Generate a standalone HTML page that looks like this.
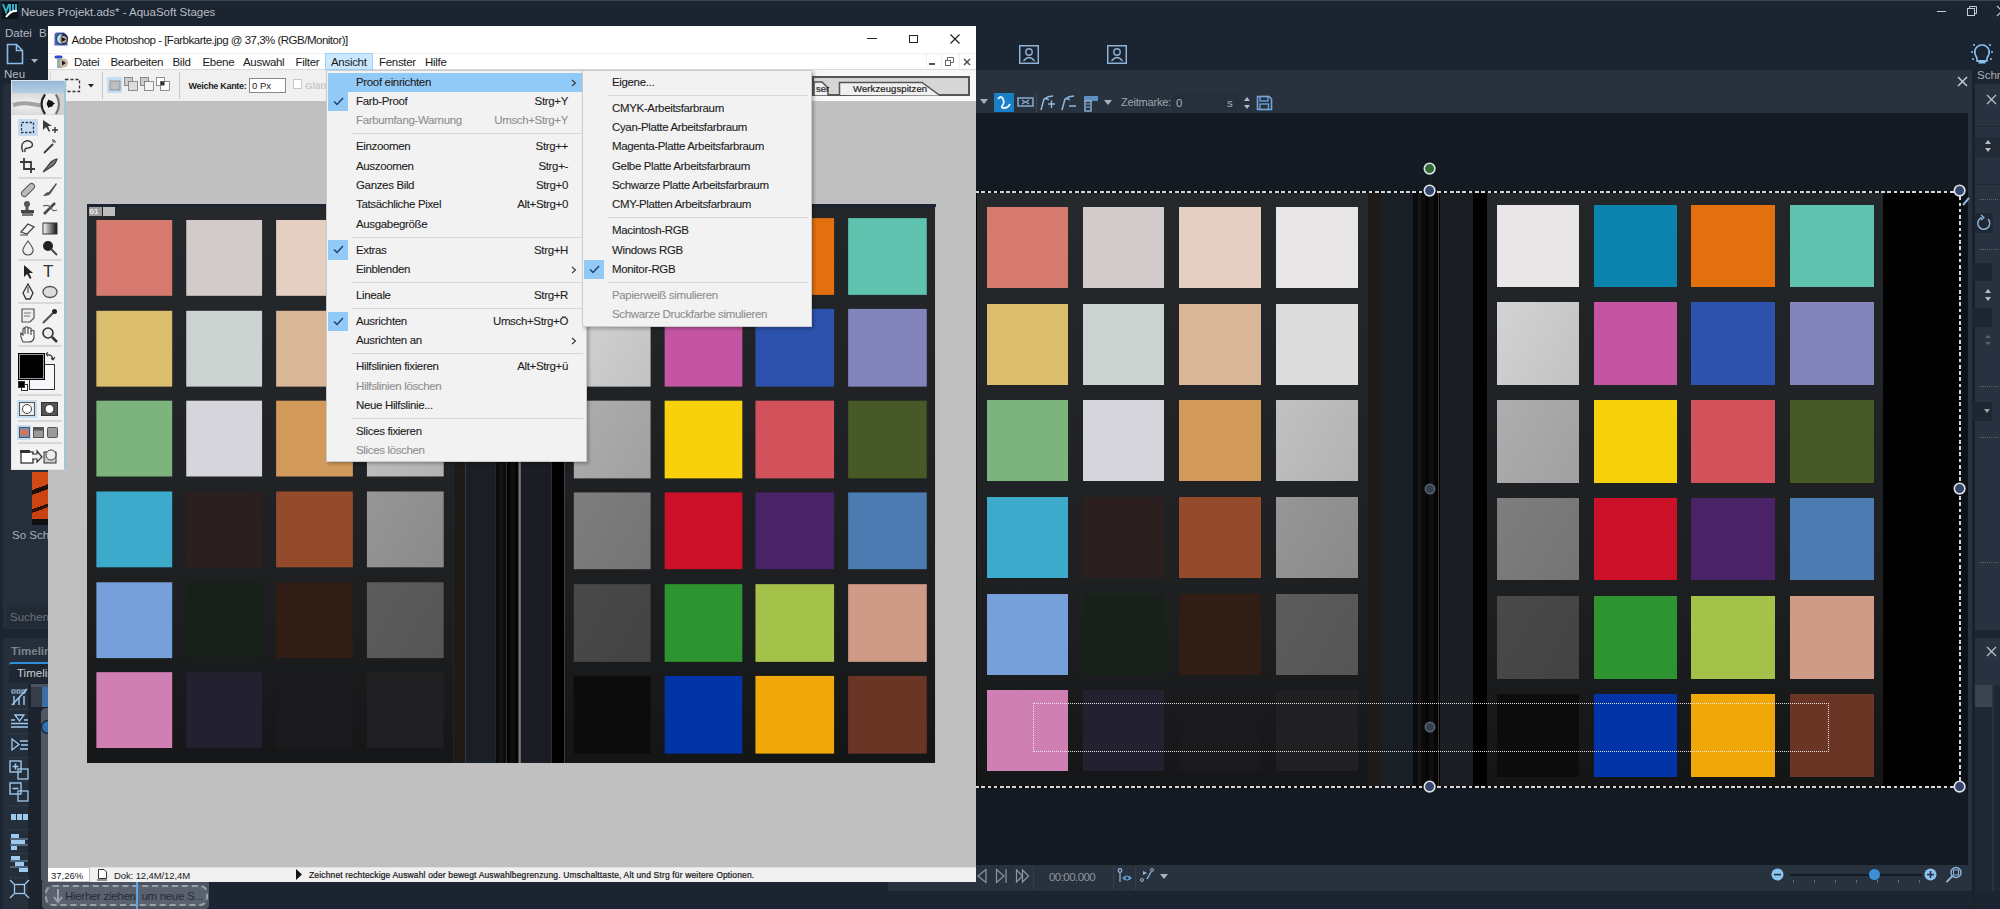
<!DOCTYPE html><html><head><meta charset="utf-8"><style>html,body{margin:0;padding:0;}body{width:2000px;height:909px;overflow:hidden;position:relative;background:#1b2431;font-family:"Liberation Sans", sans-serif;}div,svg{box-sizing:border-box;}</style></head><body>
<div style="position:absolute;left:0px;top:0px;width:2000px;height:1px;background:#3d4451"></div>
<svg style="position:absolute;left:2px;top:2px;" width="16" height="17" viewBox="0 0 16 17"><rect x="0" y="0" width="16" height="17" fill="#0b1118"/><path d="M1 2 L4 10 L7 2 M8 2 V11 M11 2 V9 M14 2 V9" stroke="#2fb3c9" stroke-width="2" fill="none"/><path d="M4 15 Q9 8 15 9" stroke="#ffffff" stroke-width="2" fill="none"/></svg>
<div style="position:absolute;left:21px;top:3.50px;height:16px;line-height:16px;font-size:11.5px;color:#b9bec6;white-space:nowrap;">Neues Projekt.ads* - AquaSoft Stages</div>
<div style="position:absolute;left:1937px;top:11px;width:9px;height:1px;background:#c8ccd2"></div>
<svg style="position:absolute;left:1966px;top:5px;" width="12" height="12" viewBox="0 0 12 12"><rect x="1.5" y="3.5" width="7" height="7" fill="none" stroke="#c8ccd2"/><path d="M3.5 3.5 V1.5 H10.5 V8.5 H8.5" fill="none" stroke="#c8ccd2"/></svg>
<svg style="position:absolute;left:1994px;top:5px;" width="8" height="12" viewBox="0 0 8 12"><path d="M3 1 L13 11 M13 1 L3 11" stroke="#c8ccd2" stroke-width="1.2"/></svg>
<div style="position:absolute;left:5px;top:24.50px;height:16px;line-height:16px;font-size:11.5px;color:#b4b9c1;white-space:nowrap;">Datei</div>
<div style="position:absolute;left:39px;top:24.50px;height:16px;line-height:16px;font-size:11.5px;color:#b4b9c1;white-space:nowrap;">B</div>
<svg style="position:absolute;left:5px;top:43px;" width="20" height="23" viewBox="0 0 20 23"><path d="M2.5 1.5 H11.5 L17.5 7.5 V20.5 H2.5 Z M11.5 1.5 V7.5 H17.5" fill="none" stroke="#8dbbe6" stroke-width="1.6"/></svg>
<svg style="position:absolute;left:31px;top:59px;" width="8" height="5" viewBox="0 0 8 5"><path d="M0 0 H7 L3.5 4 Z" fill="#aab0b8"/></svg>
<div style="position:absolute;left:4px;top:65.50px;height:16px;line-height:16px;font-size:11.5px;color:#b4b9c1;white-space:nowrap;">Neu</div>
<svg style="position:absolute;left:1019px;top:45px;" width="20" height="19" viewBox="0 0 20 19"><rect x="0.75" y="0.75" width="18.5" height="17.5" fill="none" stroke="#8fb3d6" stroke-width="1.5"/><circle cx="10" cy="7" r="3.2" fill="none" stroke="#8fb3d6" stroke-width="1.4"/><path d="M4.5 16 Q10 9 15.5 16" fill="none" stroke="#8fb3d6" stroke-width="1.4"/></svg>
<svg style="position:absolute;left:1107px;top:45px;" width="20" height="19" viewBox="0 0 20 19"><rect x="0.75" y="0.75" width="18.5" height="17.5" fill="none" stroke="#8fb3d6" stroke-width="1.5"/><circle cx="10" cy="7" r="3.2" fill="none" stroke="#8fb3d6" stroke-width="1.4"/><path d="M4.5 16 Q10 9 15.5 16" fill="none" stroke="#8fb3d6" stroke-width="1.4"/></svg>
<svg style="position:absolute;left:1969px;top:42px;" width="26" height="24" viewBox="0 0 26 24"><path d="M8 16 Q5 12 6 8 Q8 3 13 3 Q18 3 20 8 Q21 12 18 16 V19 H8 Z" fill="none" stroke="#8cc4f0" stroke-width="1.6"/><rect x="9.5" y="18" width="7" height="3.5" fill="#8cc4f0"/><circle cx="3" cy="10" r="1" fill="#8cc4f0"/><circle cx="23" cy="10" r="1" fill="#8cc4f0"/><circle cx="5" cy="3" r="1" fill="#8cc4f0"/><circle cx="21" cy="3" r="1" fill="#8cc4f0"/><circle cx="4" cy="17" r="1" fill="#8cc4f0"/><circle cx="22" cy="17" r="1" fill="#8cc4f0"/></svg>
<div style="position:absolute;left:1977px;top:67.00px;height:16px;line-height:16px;font-size:11.5px;color:#a9aeb6;white-space:nowrap;">Schri</div>
<div style="position:absolute;left:888px;top:70px;width:1085px;height:821px;background:#28323e"></div>
<div style="position:absolute;left:888px;top:113px;width:1080px;height:752px;background:#131a22"></div>
<svg style="position:absolute;left:1957px;top:76px;" width="11" height="11" viewBox="0 0 11 11"><path d="M1 1 L10 10 M10 1 L1 10" stroke="#c5c9cf" stroke-width="1.5"/></svg>
<svg style="position:absolute;left:980px;top:99px;" width="9" height="6" viewBox="0 0 9 6"><path d="M0 0 H8 L4 5 Z" fill="#a9b3bf"/></svg>
<div style="position:absolute;left:994px;top:93px;width:20px;height:19px;background:#1b7fc7"></div>
<svg style="position:absolute;left:994px;top:93px;" width="20" height="19" viewBox="0 0 20 19"><path d="M4 6 Q7 2 9 6 Q11 10 8 13 Q7 15 10 15 Q14 15 16 11" fill="none" stroke="#e6f3ff" stroke-width="1.8"/></svg>
<svg style="position:absolute;left:1017px;top:95px;" width="17" height="14" viewBox="0 0 17 14"><rect x="1" y="3" width="15" height="8" fill="none" stroke="#8fb6dc" stroke-width="1.4"/><path d="M5 5 L8 7 L5 9 M12 5 L9 7 L12 9" fill="none" stroke="#8fb6dc" stroke-width="1.2"/></svg>
<div style="position:absolute;left:1036px;top:94px;width:1px;height:18px;background:#3b4552"></div>
<svg style="position:absolute;left:1040px;top:95px;" width="16" height="16" viewBox="0 0 16 16"><path d="M1 15 L4 4 Q8 1 13 1 M4 4 Q6 3 9 5 M8 9 H15 M11.5 5.5 V13" fill="none" stroke="#8fb6dc" stroke-width="1.5"/></svg>
<svg style="position:absolute;left:1061px;top:95px;" width="16" height="16" viewBox="0 0 16 16"><path d="M1 15 L4 4 Q8 1 13 1 M4 4 Q6 3 9 5 M8 11 H15" fill="none" stroke="#8fb6dc" stroke-width="1.5"/></svg>
<svg style="position:absolute;left:1083px;top:95px;" width="16" height="17" viewBox="0 0 16 17"><rect x="1" y="1" width="14" height="5" fill="#5d8fbf"/><rect x="2" y="6" width="6" height="10" fill="none" stroke="#8fb6dc" stroke-width="1.4"/><path d="M3 9 H7 M3 12 H7" stroke="#8fb6dc"/></svg>
<svg style="position:absolute;left:1104px;top:100px;" width="9" height="6" viewBox="0 0 9 6"><path d="M0 0 H8 L4 5 Z" fill="#a9b3bf"/></svg>
<div style="position:absolute;left:1121px;top:95.00px;height:15px;line-height:15px;font-size:11px;color:#9ea5ae;white-space:nowrap;letter-spacing:-0.2px">Zeitmarke:</div>
<div style="position:absolute;left:1172px;top:94px;width:68px;height:17px;background:#252e3a"></div>
<div style="position:absolute;left:1176px;top:94.50px;height:16px;line-height:16px;font-size:11.5px;color:#a9b0b8;white-space:nowrap;">0</div>
<div style="position:absolute;left:1227px;top:95.00px;height:16px;line-height:16px;font-size:11.5px;color:#a9b0b8;white-space:nowrap;">s</div>
<svg style="position:absolute;left:1243px;top:96px;" width="8" height="14" viewBox="0 0 8 14"><path d="M4 1 L1 5 H7 Z M4 13 L1 9 H7 Z" fill="#b6bcc4"/></svg>
<svg style="position:absolute;left:1256px;top:95px;" width="17" height="16" viewBox="0 0 17 16"><path d="M1.5 1.5 H13 L15.5 4 V14.5 H1.5 Z" fill="none" stroke="#6fa6dc" stroke-width="1.6"/><rect x="4" y="1.5" width="8" height="4.5" fill="none" stroke="#6fa6dc" stroke-width="1.3"/><rect x="4" y="9" width="8.5" height="5.5" fill="none" stroke="#6fa6dc" stroke-width="1.3"/></svg>
<svg style="position:absolute;left:976px;top:868px;" width="12" height="16" viewBox="0 0 12 16"><path d="M10 1.5 L2 8 L10 14.5 Z" fill="none" stroke="#8e959e" stroke-width="1.2"/></svg>
<svg style="position:absolute;left:995px;top:868px;" width="13" height="16" viewBox="0 0 13 16"><path d="M1.5 1.5 L9 8 L1.5 14.5 Z M11 1 V15" fill="none" stroke="#8e959e" stroke-width="1.2"/></svg>
<svg style="position:absolute;left:1015px;top:868px;" width="15" height="16" viewBox="0 0 15 16"><path d="M1.5 2 L7.5 8 L1.5 14 Z M7.5 2 L13.5 8 L7.5 14 Z" fill="none" stroke="#8e959e" stroke-width="1.2"/></svg>
<div style="position:absolute;left:1033px;top:866px;width:1px;height:24px;background:#353e4a"></div>
<div style="position:absolute;left:1049px;top:868.50px;height:16px;line-height:16px;font-size:11.5px;color:#8e959e;white-space:nowrap;letter-spacing:-0.55px">00:00.000</div>
<div style="position:absolute;left:1113px;top:866px;width:1px;height:24px;background:#353e4a"></div>
<svg style="position:absolute;left:1117px;top:868px;" width="16" height="16" viewBox="0 0 16 16"><circle cx="3" cy="2.5" r="1.8" fill="none" stroke="#8fb6dc" stroke-width="1.2"/><path d="M3 4 V14" stroke="#8fb6dc" stroke-width="1.2"/><path d="M5 10 Q10 5 15 10 Q10 15 5 10 Z" fill="#6aa0d6"/><circle cx="10" cy="10" r="1.6" fill="#29313d"/></svg>
<div style="position:absolute;left:1135px;top:866px;width:1px;height:24px;background:#353e4a"></div>
<svg style="position:absolute;left:1140px;top:868px;" width="14" height="14" viewBox="0 0 14 14"><circle cx="12" cy="2" r="1.5" fill="none" stroke="#8fb6dc"/><circle cx="2" cy="12" r="1.5" fill="none" stroke="#8fb6dc"/><path d="M3 3 L7 5 L3 7 Z" fill="#8fb6dc"/><path d="M7 11 L11 4" stroke="#8fb6dc" stroke-width="1.4"/></svg>
<svg style="position:absolute;left:1160px;top:874px;" width="9" height="6" viewBox="0 0 9 6"><path d="M0 0 H8 L4 5 Z" fill="#a9b3bf"/></svg>
<svg style="position:absolute;left:1771px;top:868px;" width="13" height="13" viewBox="0 0 13 13"><circle cx="6.5" cy="6.5" r="6" fill="#8cc4f0"/><rect x="3" y="5.8" width="7" height="1.6" fill="#29313d"/></svg>
<div style="position:absolute;left:1790px;top:874px;width:132px;height:2px;background:#141a22"></div>
<div style="position:absolute;left:1793px;top:880px;width:1px;height:3px;background:#5f6873"></div>
<div style="position:absolute;left:1814px;top:880px;width:1px;height:3px;background:#5f6873"></div>
<div style="position:absolute;left:1835px;top:880px;width:1px;height:3px;background:#5f6873"></div>
<div style="position:absolute;left:1856px;top:880px;width:1px;height:3px;background:#5f6873"></div>
<div style="position:absolute;left:1877px;top:880px;width:1px;height:3px;background:#5f6873"></div>
<div style="position:absolute;left:1898px;top:880px;width:1px;height:3px;background:#5f6873"></div>
<div style="position:absolute;left:1919px;top:880px;width:1px;height:3px;background:#5f6873"></div>
<svg style="position:absolute;left:1868px;top:868px;" width="13" height="13" viewBox="0 0 13 13"><circle cx="6.5" cy="6.5" r="5.5" fill="#3d8fd6"/></svg>
<svg style="position:absolute;left:1924px;top:868px;" width="13" height="13" viewBox="0 0 13 13"><circle cx="6.5" cy="6.5" r="6" fill="#8cc4f0"/><rect x="3" y="5.8" width="7" height="1.6" fill="#29313d"/><rect x="5.7" y="3" width="1.6" height="7" fill="#29313d"/></svg>
<svg style="position:absolute;left:1945px;top:866px;" width="18" height="18" viewBox="0 0 18 18"><circle cx="11" cy="6.5" r="5" fill="none" stroke="#8fb6dc" stroke-width="1.4"/><rect x="8.5" y="4" width="5" height="5" fill="none" stroke="#8fb6dc"/><path d="M7.5 10 L1.5 16" stroke="#8fb6dc" stroke-width="1.8"/></svg>
<div style="position:absolute;left:1972px;top:70px;width:3px;height:839px;background:#1a212b"></div>
<div style="position:absolute;left:1975px;top:84px;width:25px;height:546px;background:#283140"></div>
<svg style="position:absolute;left:1986px;top:94px;" width="11" height="11" viewBox="0 0 11 11"><path d="M1 1 L10 10 M10 1 L1 10" stroke="#b9bec5" stroke-width="1.3"/></svg>
<div style="position:absolute;left:1975px;top:126px;width:25px;height:1px;background:#1f2733"></div>
<div style="position:absolute;left:1975px;top:137px;width:25px;height:20px;background:#222a35"></div>
<svg style="position:absolute;left:1984px;top:139px;" width="8" height="14" viewBox="0 0 8 14"><path d="M4 1 L1 5 H7 Z M4 13 L1 9 H7 Z" fill="#b6bcc4"/></svg>
<div style="position:absolute;left:1975px;top:184px;width:25px;height:1px;background:#1f2733"></div>
<div style="position:absolute;left:1980px;top:199px;width:18px;height:1px;border-top:1px dotted #59626d"></div>
<div style="position:absolute;left:1975px;top:213px;width:18px;height:20px;background:#1f2733;border-radius:2px"></div>
<svg style="position:absolute;left:1975px;top:213px;" width="18" height="20" viewBox="0 0 18 20"><path d="M13 6 A6 6 0 1 1 7 4.5" fill="none" stroke="#8fb6dc" stroke-width="1.4"/><path d="M6 2 L9 4.5 L6 7" fill="none" stroke="#8fb6dc" stroke-width="1.2"/></svg>
<div style="position:absolute;left:1980px;top:249px;width:18px;height:1px;border-top:1px dotted #59626d"></div>
<div style="position:absolute;left:1972px;top:263px;width:20px;height:18px;background:#1e2631;border-radius:2px"></div>
<svg style="position:absolute;left:1984px;top:288px;" width="8" height="14" viewBox="0 0 8 14"><path d="M4 1 L1 5 H7 Z M4 13 L1 9 H7 Z" fill="#b6bcc4"/></svg>
<div style="position:absolute;left:1972px;top:308px;width:20px;height:19px;background:#1e2631;border-radius:2px"></div>
<svg style="position:absolute;left:1984px;top:334px;" width="8" height="12" viewBox="0 0 8 12"><path d="M4 1 L1 4 H7 Z M4 11 L1 8 H7 Z" fill="#59626d"/></svg>
<div style="position:absolute;left:1980px;top:386px;width:18px;height:1px;border-top:1px dotted #59626d"></div>
<div style="position:absolute;left:1972px;top:402px;width:20px;height:19px;background:#1e2631;border-radius:2px"></div>
<svg style="position:absolute;left:1984px;top:409px;" width="7" height="5" viewBox="0 0 7 5"><path d="M0 0 H6 L3 4 Z" fill="#9aa1a9"/></svg>
<div style="position:absolute;left:1980px;top:437px;width:18px;height:1px;border-top:1px dotted #59626d"></div>
<div style="position:absolute;left:1980px;top:562px;width:18px;height:1px;border-top:1px dotted #59626d"></div>
<div style="position:absolute;left:1975px;top:638px;width:25px;height:253px;background:#283140"></div>
<svg style="position:absolute;left:1986px;top:646px;" width="11" height="11" viewBox="0 0 11 11"><path d="M1 1 L10 10 M10 1 L1 10" stroke="#b9bec5" stroke-width="1.3"/></svg>
<div style="position:absolute;left:1975px;top:685px;width:17px;height:206px;background:#1f2733"></div>
<div style="position:absolute;left:1975px;top:685px;width:17px;height:22px;background:#3a4350"></div>
<div style="position:absolute;left:1994px;top:685px;width:6px;height:206px;background:#1f2733"></div>
<div style="position:absolute;left:900px;top:191px;width:1060px;height:596px;background:#000"></div>
<div style="position:absolute;left:1960px;top:191px;width:8px;height:596px;background:#0d1118"></div>
<div style="position:absolute;left:977px;top:191px;width:906px;height:596px;overflow:hidden"><div style="position:absolute;left:0px;top:0px;width:391px;height:596px;background:linear-gradient(#26292c,#1d1f21 70%,#151617)"></div><div style="position:absolute;left:391px;top:0px;width:13px;height:596px;background:#1e1a17"></div><div style="position:absolute;left:404px;top:0px;width:32px;height:596px;background:#1a1f25"></div><div style="position:absolute;left:436px;top:0px;width:12px;height:596px;background:#0c0c0c"></div><div style="position:absolute;left:441px;top:0px;width:3px;height:596px;background:#161616"></div><div style="position:absolute;left:448px;top:0px;width:13px;height:596px;background:#050505"></div><div style="position:absolute;left:452px;top:0px;width:5px;height:596px;background:#0f0f0f"></div><div style="position:absolute;left:461px;top:0px;width:1.2px;height:596px;background:#3e352d"></div><div style="position:absolute;left:462.5px;top:0px;width:33.5px;height:596px;background:#1a1e23"></div><div style="position:absolute;left:496px;top:0px;width:14px;height:596px;background:#000000"></div><div style="position:absolute;left:510px;top:0px;width:396px;height:596px;background:linear-gradient(#24272a,#1c1e20 70%,#141516)"></div><div style="position:absolute;left:10px;top:15.5px;width:81px;height:81px;background:#d6796f"></div><div style="position:absolute;left:106px;top:15.5px;width:81px;height:81px;background:#d3cbcb"></div><div style="position:absolute;left:202px;top:15.5px;width:82px;height:81px;background:#e5cfc3"></div><div style="position:absolute;left:299px;top:15.5px;width:82px;height:81px;background:#e8e6e6"></div><div style="position:absolute;left:10px;top:112.5px;width:81px;height:81px;background:#dbbd6e"></div><div style="position:absolute;left:106px;top:112.5px;width:81px;height:81px;background:#cbd3d0"></div><div style="position:absolute;left:202px;top:112.5px;width:82px;height:81px;background:#d8b697"></div><div style="position:absolute;left:299px;top:112.5px;width:82px;height:81px;background:#dddcdc"></div><div style="position:absolute;left:10px;top:209px;width:81px;height:81px;background:#7db37c"></div><div style="position:absolute;left:106px;top:209px;width:81px;height:81px;background:#d5d5db"></div><div style="position:absolute;left:202px;top:209px;width:82px;height:81px;background:#d29a5a"></div><div style="position:absolute;left:299px;top:209px;width:82px;height:81px;background:linear-gradient(120deg,#c1c1c1,#b2b2b2)"></div><div style="position:absolute;left:10px;top:306px;width:81px;height:81px;background:#3caacb"></div><div style="position:absolute;left:106px;top:306px;width:81px;height:81px;background:#2b1f20"></div><div style="position:absolute;left:202px;top:306px;width:82px;height:81px;background:#944b2c"></div><div style="position:absolute;left:299px;top:306px;width:82px;height:81px;background:linear-gradient(120deg,#969696,#8a8a8a)"></div><div style="position:absolute;left:10px;top:403px;width:81px;height:81px;background:#77a0da"></div><div style="position:absolute;left:106px;top:403px;width:81px;height:81px;background:#182119"></div><div style="position:absolute;left:202px;top:403px;width:82px;height:81px;background:#301d15"></div><div style="position:absolute;left:299px;top:403px;width:82px;height:81px;background:linear-gradient(120deg,#5c5c5c,#555555)"></div><div style="position:absolute;left:10px;top:499px;width:81px;height:81px;background:#cf7fb1"></div><div style="position:absolute;left:106px;top:499px;width:81px;height:81px;background:#23202f"></div><div style="position:absolute;left:202px;top:499px;width:82px;height:81px;background:#1a191b"></div><div style="position:absolute;left:299px;top:499px;width:82px;height:81px;background:#201f21"></div><div style="position:absolute;left:519.5px;top:13.5px;width:82.5px;height:82.5px;background:#e8e6e6"></div><div style="position:absolute;left:617px;top:13.5px;width:83px;height:82.5px;background:#0a84ad"></div><div style="position:absolute;left:714px;top:13.5px;width:84px;height:82.5px;background:#e3700f"></div><div style="position:absolute;left:813px;top:13.5px;width:84px;height:82.5px;background:#5fc2ae"></div><div style="position:absolute;left:519.5px;top:111px;width:82.5px;height:82.5px;background:linear-gradient(120deg,#d3d3d3,#c2c2c2)"></div><div style="position:absolute;left:617px;top:111px;width:83px;height:82.5px;background:#c455a2"></div><div style="position:absolute;left:714px;top:111px;width:84px;height:82.5px;background:#2d52ae"></div><div style="position:absolute;left:813px;top:111px;width:84px;height:82.5px;background:#8484bd"></div><div style="position:absolute;left:519.5px;top:209px;width:82.5px;height:82.5px;background:linear-gradient(120deg,#aeaeae,#a0a0a0)"></div><div style="position:absolute;left:617px;top:209px;width:83px;height:82.5px;background:#f8d10d"></div><div style="position:absolute;left:714px;top:209px;width:84px;height:82.5px;background:#d2525b"></div><div style="position:absolute;left:813px;top:209px;width:84px;height:82.5px;background:#465926"></div><div style="position:absolute;left:519.5px;top:306.8px;width:82.5px;height:82.5px;background:linear-gradient(120deg,#7e7e7e,#747474)"></div><div style="position:absolute;left:617px;top:306.8px;width:83px;height:82.5px;background:#cc1028"></div><div style="position:absolute;left:714px;top:306.8px;width:84px;height:82.5px;background:#4a2266"></div><div style="position:absolute;left:813px;top:306.8px;width:84px;height:82.5px;background:#4b7bb0"></div><div style="position:absolute;left:519.5px;top:405px;width:82.5px;height:82.5px;background:linear-gradient(120deg,#494949,#434343)"></div><div style="position:absolute;left:617px;top:405px;width:83px;height:82.5px;background:#2e9432"></div><div style="position:absolute;left:714px;top:405px;width:84px;height:82.5px;background:#a4c149"></div><div style="position:absolute;left:813px;top:405px;width:84px;height:82.5px;background:#cf9a86"></div><div style="position:absolute;left:519.5px;top:503px;width:82.5px;height:82.5px;background:#0d0c0c"></div><div style="position:absolute;left:617px;top:503px;width:83px;height:82.5px;background:#0334a6"></div><div style="position:absolute;left:714px;top:503px;width:84px;height:82.5px;background:#f0a70a"></div><div style="position:absolute;left:813px;top:503px;width:84px;height:82.5px;background:#6b3526"></div></div>
<div style="position:absolute;left:900px;top:190.5px;width:1061px;height:2px;background:repeating-linear-gradient(90deg,#d6d6d6 0 3.5px,#0a0a0a 3.5px 6.25px)"></div>
<div style="position:absolute;left:900px;top:786px;width:1061px;height:2px;background:repeating-linear-gradient(90deg,#d6d6d6 0 3.5px,#0a0a0a 3.5px 6.25px)"></div>
<div style="position:absolute;left:1959px;top:190px;width:2px;height:598px;background:repeating-linear-gradient(180deg,#d6d6d6 0 3.5px,#0a0a0a 3.5px 6.25px)"></div>
<div style="position:absolute;left:1033px;top:703px;width:796px;height:49px;border:1px dotted rgba(235,235,235,0.95)"></div>
<div style="position:absolute;left:1429.5px;top:169px;width:1px;height:22px;background:#222"></div>
<svg style="position:absolute;left:1423.4px;top:162.4px;" width="13.2" height="13.2" viewBox="0 0 13.2 13.2"><circle cx="6.6" cy="6.6" r="5.3" fill="#2f6a2f" stroke="#dde1e8" stroke-width="1.6"/></svg>
<svg style="position:absolute;left:1423.4px;top:184.4px;" width="13.2" height="13.2" viewBox="0 0 13.2 13.2"><circle cx="6.6" cy="6.6" r="5.3" fill="#34466c" stroke="#dde1e8" stroke-width="1.6"/></svg>
<svg style="position:absolute;left:1953.4px;top:184.4px;" width="13.2" height="13.2" viewBox="0 0 13.2 13.2"><circle cx="6.6" cy="6.6" r="5.3" fill="#34466c" stroke="#dde1e8" stroke-width="1.6"/></svg>
<svg style="position:absolute;left:1953.4px;top:482.4px;" width="13.2" height="13.2" viewBox="0 0 13.2 13.2"><circle cx="6.6" cy="6.6" r="5.3" fill="#34466c" stroke="#dde1e8" stroke-width="1.6"/></svg>
<svg style="position:absolute;left:1423.4px;top:780.4px;" width="13.2" height="13.2" viewBox="0 0 13.2 13.2"><circle cx="6.6" cy="6.6" r="5.3" fill="#34466c" stroke="#dde1e8" stroke-width="1.6"/></svg>
<svg style="position:absolute;left:1953.4px;top:780.4px;" width="13.2" height="13.2" viewBox="0 0 13.2 13.2"><circle cx="6.6" cy="6.6" r="5.3" fill="#34466c" stroke="#dde1e8" stroke-width="1.6"/></svg>
<svg style="position:absolute;left:1424px;top:483px;" width="12" height="12" viewBox="0 0 12 12"><circle cx="6" cy="6" r="4.7" fill="rgba(70,80,100,0.75)" stroke="rgba(130,140,160,0.6)" stroke-width="1.6"/></svg>
<svg style="position:absolute;left:1424px;top:721px;" width="12" height="12" viewBox="0 0 12 12"><circle cx="6" cy="6" r="4.7" fill="rgba(70,80,100,0.75)" stroke="rgba(130,140,160,0.6)" stroke-width="1.6"/></svg>
<svg style="position:absolute;left:1962px;top:196px;" width="9" height="10" viewBox="0 0 9 10"><path d="M1 9 L7 2" stroke="#8fb6dc" stroke-width="2"/></svg>
<div style="position:absolute;left:3px;top:84px;width:60px;height:545px;background:#252e3b;border-radius:4px"></div>
<div style="position:absolute;left:32px;top:472px;width:20px;height:53px;background:linear-gradient(160deg,#d24a16 0 30%,#1a0f0a 30% 38%,#cc4414 38% 62%,#2a1208 62% 68%,#c84212 68%)"></div>
<div style="position:absolute;left:32px;top:519px;width:20px;height:6px;background:#111"></div>
<div style="position:absolute;left:12px;top:527.00px;height:16px;line-height:16px;font-size:11.5px;color:#a9afb6;white-space:nowrap;">So Schö</div>
<div style="position:absolute;left:7px;top:604px;width:45px;height:24px;background:#212a35;border-radius:3px"></div>
<div style="position:absolute;left:10px;top:608.50px;height:16px;line-height:16px;font-size:11.5px;color:#6a727c;white-space:nowrap;">Suchen</div>
<div style="position:absolute;left:3px;top:638px;width:60px;height:271px;background:#252e3b;border-radius:4px 4px 0 0"></div>
<div style="position:absolute;left:11px;top:643.00px;height:16px;line-height:16px;font-size:11.5px;color:#7b838d;white-space:nowrap;"><b>Timeline</b></div>
<div style="position:absolute;left:9px;top:662px;width:50px;height:21px;background:#1e2631;border-top:2px solid #2c8fd8;border-radius:3px 3px 0 0"></div>
<div style="position:absolute;left:17px;top:665.00px;height:16px;line-height:16px;font-size:11.5px;color:#c9cdd3;white-space:nowrap;">Timeline</div>
<div style="position:absolute;left:28px;top:683px;width:20px;height:226px;background:#1c232d"></div>
<div style="position:absolute;left:31px;top:684px;width:17px;height:23px;background:#343d49;border-top:3px solid #4a5563"></div>
<div style="position:absolute;left:42px;top:687px;width:6px;height:20px;background:#3a6ea6"></div>
<svg style="position:absolute;left:10px;top:688px;" width="19" height="18" viewBox="0 0 19 18"><path d="M2 17 L17 1" stroke="#9ec8ec" stroke-width="1.6"/><rect x="2" y="2" width="3" height="3" fill="none" stroke="#9ec8ec"/><rect x="7" y="2" width="3" height="3" fill="none" stroke="#9ec8ec"/><rect x="12" y="2" width="3" height="3" fill="none" stroke="#9ec8ec"/><path d="M4 8 V17 M9 9 V17 M14 8 V17" stroke="#9ec8ec" stroke-width="1.4"/></svg>
<svg style="position:absolute;left:10px;top:713px;" width="19" height="16" viewBox="0 0 19 16"><path d="M5 2 L9.5 8 L14 2 Z" fill="none" stroke="#9ec8ec" stroke-width="1.3"/><path d="M1 7 H5 M14 7 H18 M1 10.5 H18 M1 14 H18" stroke="#9ec8ec" stroke-width="1.6"/></svg>
<svg style="position:absolute;left:10px;top:737px;" width="19" height="16" viewBox="0 0 19 16"><path d="M2 2 L9 7.5 L2 13 Z" fill="none" stroke="#9ec8ec" stroke-width="1.3"/><path d="M10 4 H18 M11 8 H18 M10 12 H18" stroke="#9ec8ec" stroke-width="1.6"/></svg>
<svg style="position:absolute;left:9px;top:760px;" width="21" height="21" viewBox="0 0 21 21"><rect x="1" y="1" width="11" height="11" fill="none" stroke="#9ec8ec" stroke-width="1.4"/><path d="M3.5 6.5 H9.5 M6.5 3.5 V9.5" stroke="#9ec8ec" stroke-width="1.6"/><rect x="9" y="9" width="10" height="10" fill="none" stroke="#9ec8ec" stroke-width="1.3"/></svg>
<svg style="position:absolute;left:9px;top:782px;" width="21" height="21" viewBox="0 0 21 21"><rect x="1" y="1" width="11" height="11" fill="none" stroke="#9ec8ec" stroke-width="1.4"/><path d="M3.5 6.5 H9.5" stroke="#9ec8ec" stroke-width="1.6"/><rect x="9" y="9" width="10" height="10" fill="none" stroke="#9ec8ec" stroke-width="1.3"/></svg>
<svg style="position:absolute;left:10px;top:812px;" width="19" height="10" viewBox="0 0 19 10"><rect x="1" y="2" width="17" height="6" fill="#9ec8ec"/><path d="M6.5 2 V8 M12.5 2 V8" stroke="#252e3b" stroke-width="1"/></svg>
<svg style="position:absolute;left:10px;top:833px;" width="19" height="19" viewBox="0 0 19 19"><rect x="1" y="1" width="8" height="4" fill="#9ec8ec"/><rect x="1" y="7" width="14" height="4" fill="#9ec8ec"/><rect x="1" y="13" width="6" height="4" fill="#9ec8ec"/><path d="M0 6 H18 M0 12 H18" stroke="#9ec8ec" stroke-width="0.7"/></svg>
<svg style="position:absolute;left:10px;top:855px;" width="19" height="20" viewBox="0 0 19 20"><rect x="1" y="1" width="9" height="4" fill="#9ec8ec"/><rect x="5" y="7" width="9" height="4" fill="#9ec8ec"/><rect x="9" y="13" width="9" height="4" fill="#9ec8ec"/><path d="M0 6 H18 M0 12 H18" stroke="#9ec8ec" stroke-width="0.7"/></svg>
<svg style="position:absolute;left:9px;top:879px;" width="21" height="20" viewBox="0 0 21 20"><rect x="5.5" y="5.5" width="10" height="9" fill="none" stroke="#9ec8ec" stroke-width="1.3"/><path d="M1 1 L5 5 M20 1 L16 5 M1 19 L5 15 M20 19 L16 15" stroke="#9ec8ec" stroke-width="1.3"/></svg>
<div style="position:absolute;left:9px;top:709px;width:20px;height:1px;background:#303946"></div>
<div style="position:absolute;left:9px;top:733px;width:20px;height:1px;background:#303946"></div>
<div style="position:absolute;left:9px;top:757px;width:20px;height:1px;background:#303946"></div>
<div style="position:absolute;left:9px;top:781px;width:20px;height:1px;background:#303946"></div>
<div style="position:absolute;left:9px;top:805px;width:20px;height:1px;background:#303946"></div>
<div style="position:absolute;left:9px;top:829px;width:20px;height:1px;background:#303946"></div>
<div style="position:absolute;left:9px;top:853px;width:20px;height:1px;background:#303946"></div>
<div style="position:absolute;left:9px;top:877px;width:20px;height:1px;background:#303946"></div>
<div style="position:absolute;left:42px;top:882px;width:167px;height:27px;background:#4b5361;border-radius:0 0 4px 4px"></div>
<div style="position:absolute;left:45px;top:885px;width:163px;height:21px;border:2px dashed #9aa1ab;border-radius:8px;background:#5a626f"></div>
<svg style="position:absolute;left:52px;top:888px;" width="12" height="16" viewBox="0 0 12 16"><path d="M6 1 V13 M2 9 L6 14 L10 9" fill="none" stroke="#9aa1ab" stroke-width="2"/></svg>
<div style="position:absolute;left:65px;top:888.00px;height:16px;line-height:16px;font-size:11.5px;color:#262c36;white-space:nowrap;letter-spacing:-0.3px">Hierher ziehen, um neue S...</div>
<div style="position:absolute;left:136px;top:882px;width:2px;height:27px;background:#5ba6e8"></div>
<div style="position:absolute;left:41px;top:708px;width:7px;height:175px;background:#4f5765;border-radius:5px 0 0 5px"></div>
<svg style="position:absolute;left:40px;top:719px;" width="8" height="16" viewBox="0 0 8 16"><circle cx="8" cy="8" r="6.5" fill="#2f6fb0" stroke="#1a2a3a" stroke-width="1.5"/></svg>
<div style="position:absolute;left:48px;top:26px;width:928px;height:856px;background:#c0c0c0"></div>
<div style="position:absolute;left:48px;top:26px;width:928px;height:27px;background:#ffffff"></div>
<svg style="position:absolute;left:54px;top:31px;" width="15" height="16" viewBox="0 0 15 16"><path d="M0.5 4 Q0.5 1.5 3 1.5 H10 L13.5 5 V14.5 H0.5 Z" fill="#4d5fae"/><circle cx="8.2" cy="8" r="6" fill="#26305e"/><path d="M8 3 A5 5 0 0 0 8 13 Q5 8 8 3 Z" fill="#a8e6ee"/><circle cx="9.2" cy="8.5" r="3.6" fill="#b8a48c"/><path d="M7.5 6 L12 8.5 L7.5 11 Z" fill="#111"/></svg>
<div style="position:absolute;left:71.5px;top:32.00px;height:16px;line-height:16px;font-size:11.5px;color:#1a1a1a;white-space:nowrap;letter-spacing:-0.5px">Adobe Photoshop - [Farbkarte.jpg @ 37,3% (RGB/Monitor)]</div>
<div style="position:absolute;left:867px;top:38px;width:10px;height:1px;background:#222"></div>
<div style="position:absolute;left:909px;top:35px;width:9px;height:8px;border:1px solid #222"></div>
<svg style="position:absolute;left:950px;top:34px;" width="10" height="10" viewBox="0 0 10 10"><path d="M0.5 0.5 L9.5 9.5 M9.5 0.5 L0.5 9.5" stroke="#222" stroke-width="1.2"/></svg>
<div style="position:absolute;left:48px;top:53px;width:928px;height:17px;background:#ffffff;border-top:1px solid #f0f0f0;border-bottom:1px solid #dadada"></div>
<svg style="position:absolute;left:54px;top:54px;" width="15" height="15" viewBox="0 0 15 15"><rect x="0.5" y="1.5" width="8" height="3" rx="1.5" fill="#3344d8"/><rect x="3" y="4" width="5" height="10" fill="#8fb0b0"/><circle cx="9.5" cy="9" r="4.5" fill="#c9b8a0"/><path d="M8 6.5 L12 9 L8 11.5 Z" fill="#1a1a1a"/></svg>
<div style="position:absolute;left:325px;top:53px;width:48px;height:17px;background:#cce8ff;border:1px solid #99d1ff"></div>
<div style="position:absolute;left:74px;top:53.50px;height:16px;line-height:16px;font-size:11.5px;color:#1a1a1a;white-space:nowrap;letter-spacing:-0.3px">Datei</div>
<div style="position:absolute;left:110.5px;top:53.50px;height:16px;line-height:16px;font-size:11.5px;color:#1a1a1a;white-space:nowrap;letter-spacing:-0.3px">Bearbeiten</div>
<div style="position:absolute;left:172.5px;top:53.50px;height:16px;line-height:16px;font-size:11.5px;color:#1a1a1a;white-space:nowrap;letter-spacing:-0.3px">Bild</div>
<div style="position:absolute;left:202.5px;top:53.50px;height:16px;line-height:16px;font-size:11.5px;color:#1a1a1a;white-space:nowrap;letter-spacing:-0.3px">Ebene</div>
<div style="position:absolute;left:243px;top:53.50px;height:16px;line-height:16px;font-size:11.5px;color:#1a1a1a;white-space:nowrap;letter-spacing:-0.3px">Auswahl</div>
<div style="position:absolute;left:295.5px;top:53.50px;height:16px;line-height:16px;font-size:11.5px;color:#1a1a1a;white-space:nowrap;letter-spacing:-0.3px">Filter</div>
<div style="position:absolute;left:331px;top:53.50px;height:16px;line-height:16px;font-size:11.5px;color:#1a1a1a;white-space:nowrap;letter-spacing:-0.3px">Ansicht</div>
<div style="position:absolute;left:379px;top:53.50px;height:16px;line-height:16px;font-size:11.5px;color:#1a1a1a;white-space:nowrap;letter-spacing:-0.3px">Fenster</div>
<div style="position:absolute;left:425px;top:53.50px;height:16px;line-height:16px;font-size:11.5px;color:#1a1a1a;white-space:nowrap;letter-spacing:-0.3px">Hilfe</div>
<div style="position:absolute;left:926px;top:54px;width:1px;height:15px;background:#eeeeee"></div>
<div style="position:absolute;left:941px;top:54px;width:1px;height:15px;background:#eeeeee"></div>
<div style="position:absolute;left:959px;top:54px;width:1px;height:15px;background:#eeeeee"></div>
<div style="position:absolute;left:929px;top:63px;width:6px;height:2px;background:#555"></div>
<svg style="position:absolute;left:945px;top:57px;" width="9" height="9" viewBox="0 0 9 9"><rect x="0.5" y="3.5" width="5" height="5" fill="none" stroke="#666"/><path d="M2.5 3.5 V0.5 H8.5 V5.5 H5.5" fill="none" stroke="#666"/></svg>
<svg style="position:absolute;left:963px;top:58px;" width="8" height="8" viewBox="0 0 8 8"><path d="M1 1 L7 7 M7 1 L1 7" stroke="#555" stroke-width="1.6"/></svg>
<div style="position:absolute;left:48px;top:70px;width:928px;height:31px;background:linear-gradient(90deg,#f0f0f0 0,#f0f0f0 760px,#f8f8f8 780px)"></div>
<div style="position:absolute;left:50px;top:70px;width:1px;height:31px;background:#dcdcdc"></div>
<svg style="position:absolute;left:63px;top:78px;" width="20" height="16" viewBox="0 0 20 16"><rect x="2.5" y="1.5" width="14" height="12" fill="none" stroke="#333" stroke-width="1.3" stroke-dasharray="3 2"/></svg>
<svg style="position:absolute;left:88px;top:84px;" width="7" height="4" viewBox="0 0 7 4"><path d="M0 0 H6 L3 3.5 Z" fill="#222"/></svg>
<div style="position:absolute;left:102px;top:72px;width:1px;height:27px;background:#c8c8c8"></div>
<div style="position:absolute;left:107px;top:77px;width:15px;height:16px;background:#c4ddf3;border-radius:1px"></div>
<svg style="position:absolute;left:109px;top:79px;" width="14" height="13" viewBox="0 0 14 13"><rect x="1" y="2" width="10" height="9" fill="#bdbdbd" stroke="#888" stroke-width="0.8"/></svg>
<svg style="position:absolute;left:124px;top:77px;" width="15" height="15" viewBox="0 0 15 15"><rect x="0.5" y="0.5" width="8" height="8" fill="#ccc" stroke="#777" stroke-width="0.8"/><rect x="4.5" y="4.5" width="9" height="9" fill="#ddd" stroke="#777" stroke-width="0.8"/></svg>
<svg style="position:absolute;left:140px;top:77px;" width="15" height="15" viewBox="0 0 15 15"><rect x="0.5" y="0.5" width="8" height="8" fill="#ccc" stroke="#777" stroke-width="0.8"/><rect x="4.5" y="4.5" width="9" height="9" fill="#f4f4f4" stroke="#777" stroke-width="0.8"/></svg>
<svg style="position:absolute;left:156px;top:77px;" width="15" height="15" viewBox="0 0 15 15"><rect x="0.5" y="0.5" width="8" height="8" fill="#fff" stroke="#777" stroke-width="0.8"/><rect x="4.5" y="4.5" width="9" height="9" fill="#fff" stroke="#777" stroke-width="0.8"/><rect x="4.5" y="4.5" width="4" height="4" fill="#333"/></svg>
<div style="position:absolute;left:179px;top:72px;width:1px;height:27px;background:#c8c8c8"></div>
<div style="position:absolute;left:188.5px;top:79.50px;height:13px;line-height:13px;font-size:9px;color:#222;white-space:nowrap;font-weight:bold;letter-spacing:-0.3px">Weiche Kante:</div>
<div style="position:absolute;left:249px;top:78px;width:37px;height:15px;background:#fff;border:1px solid #888"></div>
<div style="position:absolute;left:252px;top:79.00px;height:13px;line-height:13px;font-size:9.5px;color:#222;white-space:nowrap;">0 Px</div>
<div style="position:absolute;left:293px;top:79px;width:9px;height:10px;background:#fff;border:1px solid #c8c8c8"></div>
<div style="position:absolute;left:305px;top:78.50px;height:13px;line-height:13px;font-size:9.5px;color:#c8c8c8;white-space:nowrap;font-weight:bold">Glätt</div>
<div style="position:absolute;left:812px;top:76px;width:158px;height:20px;background:#d6d6d6;border:2px solid #555"></div>
<svg style="position:absolute;left:814px;top:80px;" width="130" height="16" viewBox="0 0 130 16"><path d="M0 2 H8 L14 8 V16 H0 Z" fill="#f0f0f0" stroke="#555" stroke-width="1.5"/><path d="M25.5 15 V2.5 H108 L126 15.5" fill="#f0f0f0" stroke="#555" stroke-width="1.5"/></svg>
<div style="position:absolute;left:816px;top:82.00px;height:13px;line-height:13px;font-size:9.5px;color:#222;white-space:nowrap;-webkit-text-stroke:0.2px #222">ser</div>
<div style="position:absolute;left:853px;top:82.00px;height:13px;line-height:13px;font-size:9.5px;color:#222;white-space:nowrap;letter-spacing:0.1px;-webkit-text-stroke:0.2px #222">Werkzeugspitzen</div>
<div style="position:absolute;left:48px;top:867px;width:928px;height:15px;background:#f0f0f0;border-top:1px solid #e2e2e2"></div>
<div style="position:absolute;left:48px;top:867px;width:42px;height:15px;background:#ffffff;border:1px solid #c4c4c4;border-left:0"></div>
<div style="position:absolute;left:51px;top:869.00px;height:13px;line-height:13px;font-size:9.5px;color:#222;white-space:nowrap;">37,26%</div>
<svg style="position:absolute;left:96px;top:868px;" width="12" height="13" viewBox="0 0 12 13"><path d="M2.5 1.5 H8 L10.5 4 V10.5 H2.5 Z" fill="#fff" stroke="#333"/><path d="M1 12 H11" stroke="#333"/></svg>
<div style="position:absolute;left:114px;top:868.50px;height:13px;line-height:13px;font-size:9.5px;color:#222;white-space:nowrap;letter-spacing:-0.1px">Dok: 12,4M/12,4M</div>
<svg style="position:absolute;left:296px;top:869px;" width="7" height="11" viewBox="0 0 7 11"><path d="M0 0 L6 5.5 L0 11 Z" fill="#111"/></svg>
<div style="position:absolute;left:309px;top:869.00px;height:12px;line-height:12px;font-size:8.5px;color:#151515;white-space:nowrap;letter-spacing:0.15px;-webkit-text-stroke:0.2px #151515">Zeichnet rechteckige Auswahl oder bewegt Auswahlbegrenzung. Umschalttaste, Alt und Strg für weitere Optionen.</div>
<div style="position:absolute;left:87px;top:204.5px;width:906px;height:596px;overflow:hidden;transform-origin:0 0;transform:scale(0.9362,0.9362)"><div style="position:absolute;left:0px;top:0px;width:391px;height:596px;background:linear-gradient(#26292c,#1d1f21 70%,#151617)"></div><div style="position:absolute;left:391px;top:0px;width:13px;height:596px;background:#1e1a17"></div><div style="position:absolute;left:404px;top:0px;width:32px;height:596px;background:#1a1f25"></div><div style="position:absolute;left:436px;top:0px;width:12px;height:596px;background:#0c0c0c"></div><div style="position:absolute;left:441px;top:0px;width:3px;height:596px;background:#161616"></div><div style="position:absolute;left:448px;top:0px;width:13px;height:596px;background:#050505"></div><div style="position:absolute;left:452px;top:0px;width:5px;height:596px;background:#0f0f0f"></div><div style="position:absolute;left:461px;top:0px;width:1.2px;height:596px;background:#3e352d"></div><div style="position:absolute;left:462.5px;top:0px;width:33.5px;height:596px;background:#1a1e23"></div><div style="position:absolute;left:496px;top:0px;width:14px;height:596px;background:#000000"></div><div style="position:absolute;left:510px;top:0px;width:396px;height:596px;background:linear-gradient(#24272a,#1c1e20 70%,#141516)"></div><div style="position:absolute;left:10px;top:15.5px;width:81px;height:81px;background:#d6796f"></div><div style="position:absolute;left:106px;top:15.5px;width:81px;height:81px;background:#d3cbcb"></div><div style="position:absolute;left:202px;top:15.5px;width:82px;height:81px;background:#e5cfc3"></div><div style="position:absolute;left:299px;top:15.5px;width:82px;height:81px;background:#e8e6e6"></div><div style="position:absolute;left:10px;top:112.5px;width:81px;height:81px;background:#dbbd6e"></div><div style="position:absolute;left:106px;top:112.5px;width:81px;height:81px;background:#cbd3d0"></div><div style="position:absolute;left:202px;top:112.5px;width:82px;height:81px;background:#d8b697"></div><div style="position:absolute;left:299px;top:112.5px;width:82px;height:81px;background:#dddcdc"></div><div style="position:absolute;left:10px;top:209px;width:81px;height:81px;background:#7db37c"></div><div style="position:absolute;left:106px;top:209px;width:81px;height:81px;background:#d5d5db"></div><div style="position:absolute;left:202px;top:209px;width:82px;height:81px;background:#d29a5a"></div><div style="position:absolute;left:299px;top:209px;width:82px;height:81px;background:linear-gradient(120deg,#c1c1c1,#b2b2b2)"></div><div style="position:absolute;left:10px;top:306px;width:81px;height:81px;background:#3caacb"></div><div style="position:absolute;left:106px;top:306px;width:81px;height:81px;background:#2b1f20"></div><div style="position:absolute;left:202px;top:306px;width:82px;height:81px;background:#944b2c"></div><div style="position:absolute;left:299px;top:306px;width:82px;height:81px;background:linear-gradient(120deg,#969696,#8a8a8a)"></div><div style="position:absolute;left:10px;top:403px;width:81px;height:81px;background:#77a0da"></div><div style="position:absolute;left:106px;top:403px;width:81px;height:81px;background:#182119"></div><div style="position:absolute;left:202px;top:403px;width:82px;height:81px;background:#301d15"></div><div style="position:absolute;left:299px;top:403px;width:82px;height:81px;background:linear-gradient(120deg,#5c5c5c,#555555)"></div><div style="position:absolute;left:10px;top:499px;width:81px;height:81px;background:#cf7fb1"></div><div style="position:absolute;left:106px;top:499px;width:81px;height:81px;background:#23202f"></div><div style="position:absolute;left:202px;top:499px;width:82px;height:81px;background:#1a191b"></div><div style="position:absolute;left:299px;top:499px;width:82px;height:81px;background:#201f21"></div><div style="position:absolute;left:519.5px;top:13.5px;width:82.5px;height:82.5px;background:#e8e6e6"></div><div style="position:absolute;left:617px;top:13.5px;width:83px;height:82.5px;background:#0a84ad"></div><div style="position:absolute;left:714px;top:13.5px;width:84px;height:82.5px;background:#e3700f"></div><div style="position:absolute;left:813px;top:13.5px;width:84px;height:82.5px;background:#5fc2ae"></div><div style="position:absolute;left:519.5px;top:111px;width:82.5px;height:82.5px;background:linear-gradient(120deg,#d3d3d3,#c2c2c2)"></div><div style="position:absolute;left:617px;top:111px;width:83px;height:82.5px;background:#c455a2"></div><div style="position:absolute;left:714px;top:111px;width:84px;height:82.5px;background:#2d52ae"></div><div style="position:absolute;left:813px;top:111px;width:84px;height:82.5px;background:#8484bd"></div><div style="position:absolute;left:519.5px;top:209px;width:82.5px;height:82.5px;background:linear-gradient(120deg,#aeaeae,#a0a0a0)"></div><div style="position:absolute;left:617px;top:209px;width:83px;height:82.5px;background:#f8d10d"></div><div style="position:absolute;left:714px;top:209px;width:84px;height:82.5px;background:#d2525b"></div><div style="position:absolute;left:813px;top:209px;width:84px;height:82.5px;background:#465926"></div><div style="position:absolute;left:519.5px;top:306.8px;width:82.5px;height:82.5px;background:linear-gradient(120deg,#7e7e7e,#747474)"></div><div style="position:absolute;left:617px;top:306.8px;width:83px;height:82.5px;background:#cc1028"></div><div style="position:absolute;left:714px;top:306.8px;width:84px;height:82.5px;background:#4a2266"></div><div style="position:absolute;left:813px;top:306.8px;width:84px;height:82.5px;background:#4b7bb0"></div><div style="position:absolute;left:519.5px;top:405px;width:82.5px;height:82.5px;background:linear-gradient(120deg,#494949,#434343)"></div><div style="position:absolute;left:617px;top:405px;width:83px;height:82.5px;background:#2e9432"></div><div style="position:absolute;left:714px;top:405px;width:84px;height:82.5px;background:#a4c149"></div><div style="position:absolute;left:813px;top:405px;width:84px;height:82.5px;background:#cf9a86"></div><div style="position:absolute;left:519.5px;top:503px;width:82.5px;height:82.5px;background:#0d0c0c"></div><div style="position:absolute;left:617px;top:503px;width:83px;height:82.5px;background:#0334a6"></div><div style="position:absolute;left:714px;top:503px;width:84px;height:82.5px;background:#f0a70a"></div><div style="position:absolute;left:813px;top:503px;width:84px;height:82.5px;background:#6b3526"></div></div>
<div style="position:absolute;left:87px;top:204px;width:849px;height:3px;background:#1c2333"></div>
<div style="position:absolute;left:89px;top:207px;width:13px;height:9px;background:#9e9e9e"></div>
<div style="position:absolute;left:89.5px;top:206.00px;height:11px;line-height:11px;font-size:8px;color:#eee;white-space:nowrap;font-weight:bold">01</div>
<div style="position:absolute;left:103px;top:207px;width:12px;height:9px;background:#bdbdbd"></div>
<div style="position:absolute;left:11px;top:80px;width:55px;height:390px;background:#f2f2f2;border:1px solid #dde6ee;border-right:2px solid #9cc8d8"></div>
<div style="position:absolute;left:12px;top:81px;width:52px;height:13px;background:linear-gradient(#98b7d6,#b8cfe6)"></div>
<svg style="position:absolute;left:12px;top:93px;" width="52" height="22" viewBox="0 0 52 22"><defs><radialGradient id="lg" cx="0.3" cy="0.5" r="0.7"><stop offset="0" stop-color="#f4f4f4"/><stop offset="1" stop-color="#d0d0d0"/></radialGradient></defs><rect width="52" height="22" fill="url(#lg)"/><path d="M1 12 Q10 9 20 11 T30 12" stroke="#8a8a8a" stroke-width="4" fill="none" opacity="0.75"/><ellipse cx="38.5" cy="11" rx="9" ry="10.5" fill="#ececec"/><path d="M33 1.5 Q26 11 33 21" stroke="#222" stroke-width="2.2" fill="none"/><path d="M44 1.5 Q50 11 44 21" stroke="#555" stroke-width="2.2" fill="none" opacity="0.8"/><path d="M36 6.5 L43 10.5 L36 15 Z" fill="#0a0a0a"/><circle cx="38" cy="10.8" r="3.2" fill="#111"/></svg>
<div style="position:absolute;left:18px;top:119px;width:20px;height:17px;background:#c4ddf3"></div>
<svg style="position:absolute;left:19px;top:120px;" width="18" height="15" viewBox="0 0 18 15"><rect x="2.5" y="2.5" width="12" height="10" fill="none" stroke="#3a3a3a" stroke-width="1.3" stroke-dasharray="2.5 1.5"/></svg>
<svg style="position:absolute;left:41px;top:119px;" width="18" height="17" viewBox="0 0 18 17"><path d="M2 1 L2 11 L5 8 L8 13 L9 12 L7 7 L11 7 Z" fill="#3a3a3a"/><path d="M11 11 H17 M14 8 V14" stroke="#3a3a3a" stroke-width="1.4"/></svg>
<svg style="position:absolute;left:19px;top:138px;" width="18" height="17" viewBox="0 0 18 17"><path d="M4 14 Q1 7 5 4 Q10 1 13 5 Q15 9 9 10 Q5 10 6 14" fill="none" stroke="#3a3a3a" stroke-width="1.4"/></svg>
<svg style="position:absolute;left:41px;top:138px;" width="18" height="17" viewBox="0 0 18 17"><path d="M3 15 L12 6" stroke="#3a3a3a" stroke-width="1.8"/><path d="M12 1 V4 M15 4 H12 M14 2 L13 3" stroke="#3a3a3a" stroke-width="1"/></svg>
<svg style="position:absolute;left:19px;top:157px;" width="18" height="17" viewBox="0 0 18 17"><path d="M5 1 V12 H16 M1 5 H12 V16" fill="none" stroke="#3a3a3a" stroke-width="1.8"/></svg>
<svg style="position:absolute;left:41px;top:157px;" width="18" height="17" viewBox="0 0 18 17"><path d="M2 15 L10 5 Q14 2 16 2 Q14 8 10 10 Z" fill="#777" stroke="#3a3a3a" stroke-width="1.2"/></svg>
<div style="position:absolute;left:18px;top:177px;width:44px;height:2px;background:#d8d8d8"></div>
<svg style="position:absolute;left:19px;top:181px;" width="18" height="17" viewBox="0 0 18 17"><rect x="1" y="6" width="16" height="6" rx="3" fill="#bbb" stroke="#555" transform="rotate(-45 9 9)"/></svg>
<svg style="position:absolute;left:41px;top:181px;" width="18" height="17" viewBox="0 0 18 17"><path d="M2 15 Q5 11 8 11 L15 2 L16 3 L10 12 Q9 15 2 15 Z" fill="#555"/></svg>
<svg style="position:absolute;left:19px;top:200px;" width="18" height="17" viewBox="0 0 18 17"><circle cx="8" cy="4" r="3" fill="#555"/><rect x="6.5" y="6" width="3" height="4" fill="#555"/><rect x="2" y="10" width="13" height="3" fill="#444"/><rect x="3" y="13" width="11" height="3" fill="#777"/></svg>
<svg style="position:absolute;left:41px;top:200px;" width="18" height="17" viewBox="0 0 18 17"><path d="M3 14 L14 3" stroke="#444" stroke-width="2.5"/><path d="M2 6 Q8 4 10 8 Q12 12 16 10" stroke="#666" stroke-width="1.3" fill="none"/></svg>
<svg style="position:absolute;left:19px;top:220px;" width="18" height="17" viewBox="0 0 18 17"><path d="M2 12 L9 4 L15 7 L8 14 Z" fill="#f4f4f4" stroke="#444" stroke-width="1.3"/><path d="M1 15 H9" stroke="#444"/></svg>
<svg style="position:absolute;left:41px;top:220px;" width="18" height="17" viewBox="0 0 18 17"><defs><linearGradient id="gg"><stop offset="0" stop-color="#fff"/><stop offset="1" stop-color="#111"/></linearGradient></defs><rect x="2" y="3" width="14" height="11" fill="url(#gg)" stroke="#333"/></svg>
<svg style="position:absolute;left:19px;top:239px;" width="18" height="17" viewBox="0 0 18 17"><path d="M9 2 Q3 10 4 12 Q5 16 9 16 Q13 16 14 12 Q15 10 9 2 Z" fill="#eee" stroke="#555" stroke-width="1.2"/></svg>
<svg style="position:absolute;left:41px;top:239px;" width="18" height="17" viewBox="0 0 18 17"><circle cx="7" cy="7" r="5" fill="#222"/><path d="M10 10 L16 16" stroke="#444" stroke-width="2"/></svg>
<div style="position:absolute;left:18px;top:259px;width:44px;height:2px;background:#d8d8d8"></div>
<svg style="position:absolute;left:19px;top:263px;" width="18" height="18" viewBox="0 0 18 18"><path d="M5 2 V14 L8 11 L11 16 L12.5 15 L10 10 L14 10 Z" fill="#222"/></svg>
<div style="position:absolute;left:43px;top:260.00px;height:24px;line-height:24px;font-size:17px;color:#333;white-space:nowrap;font-family:"Liberation Serif",serif;font-weight:bold">T</div>
<svg style="position:absolute;left:19px;top:283px;" width="18" height="18" viewBox="0 0 18 18"><path d="M9 1 L14 10 L11 16 H7 L4 10 Z" fill="#eee" stroke="#333" stroke-width="1.3"/><path d="M9 4 V10" stroke="#333"/></svg>
<svg style="position:absolute;left:41px;top:283px;" width="18" height="18" viewBox="0 0 18 18"><ellipse cx="9" cy="9" rx="7" ry="5.5" fill="#ddd" stroke="#555" stroke-width="1.3"/></svg>
<div style="position:absolute;left:18px;top:302px;width:44px;height:2px;background:#d8d8d8"></div>
<svg style="position:absolute;left:19px;top:307px;" width="18" height="18" viewBox="0 0 18 18"><path d="M3 2 H15 V11 L11 15 H3 Z" fill="#eee" stroke="#555" stroke-width="1.2"/><path d="M5 6 H12 M5 9 H11" stroke="#777"/></svg>
<svg style="position:absolute;left:41px;top:307px;" width="18" height="18" viewBox="0 0 18 18"><path d="M2 16 L12 6" stroke="#555" stroke-width="2.2"/><circle cx="13.5" cy="4.5" r="2.5" fill="#222"/></svg>
<svg style="position:absolute;left:19px;top:326px;" width="18" height="18" viewBox="0 0 18 18"><path d="M4 16 Q1 10 2 7 L4 9 V3 Q5 1 6 3 V8 V1.5 Q7.5 0 9 1.5 V8 V2.5 Q10.5 1 12 2.5 V9 V5 Q13.5 3.5 15 5 V12 Q14 16 10 16 Z" fill="#f6f6f6" stroke="#444" stroke-width="1.1"/></svg>
<svg style="position:absolute;left:41px;top:326px;" width="18" height="18" viewBox="0 0 18 18"><circle cx="7" cy="7" r="5" fill="#eee" stroke="#333" stroke-width="1.6"/><path d="M11 11 L16 16" stroke="#333" stroke-width="2.5"/></svg>
<div style="position:absolute;left:18px;top:345px;width:44px;height:2px;background:#d8d8d8"></div>
<div style="position:absolute;left:29px;top:364px;width:26px;height:26px;background:#f8f6fa;border:1px solid #333"></div>
<div style="position:absolute;left:19px;top:354px;width:25px;height:25px;background:#000;border:1px solid #999;outline:1px solid #000"></div>
<svg style="position:absolute;left:45px;top:352px;" width="11" height="10" viewBox="0 0 11 10"><path d="M2 3 Q7 2 8 7 M6 6 L8 8 L10 5 M1 2 L3 0.5 M1 2 L3 4" fill="none" stroke="#333" stroke-width="1.1"/></svg>
<svg style="position:absolute;left:18px;top:381px;" width="10" height="10" viewBox="0 0 10 10"><rect x="3.5" y="3.5" width="6" height="6" fill="#fff" stroke="#333"/><rect x="0.5" y="0.5" width="6" height="6" fill="#000" stroke="#333"/></svg>
<div style="position:absolute;left:18px;top:394px;width:44px;height:2px;background:#d8d8d8"></div>
<div style="position:absolute;left:17px;top:400px;width:20px;height:18px;background:#c4ddf3"></div>
<svg style="position:absolute;left:19px;top:402px;" width="16" height="14" viewBox="0 0 16 14"><rect x="0.5" y="0.5" width="15" height="13" fill="#eee" stroke="#555"/><circle cx="8" cy="7" r="4.5" fill="#fff" stroke="#444"/></svg>
<svg style="position:absolute;left:41px;top:402px;" width="17" height="14" viewBox="0 0 17 14"><rect x="0.5" y="0.5" width="16" height="13" fill="#555" stroke="#333"/><circle cx="8.5" cy="7" r="4.5" fill="#fff" stroke="#222"/></svg>
<div style="position:absolute;left:18px;top:420px;width:44px;height:2px;background:#d8d8d8"></div>
<div style="position:absolute;left:17px;top:425px;width:14px;height:15px;background:#c4ddf3"></div>
<svg style="position:absolute;left:19px;top:427px;" width="11" height="11" viewBox="0 0 11 11"><rect x="0.5" y="0.5" width="10" height="10" fill="#7a8fb5" stroke="#555"/><rect x="2" y="3" width="7" height="5" fill="#e07050"/></svg>
<svg style="position:absolute;left:33px;top:427px;" width="11" height="11" viewBox="0 0 11 11"><rect x="0.5" y="0.5" width="10" height="10" fill="#999" stroke="#555"/><rect x="0.5" y="0.5" width="10" height="3" fill="#555"/></svg>
<svg style="position:absolute;left:47px;top:427px;" width="11" height="11" viewBox="0 0 11 11"><rect x="0.5" y="0.5" width="10" height="10" rx="1" fill="#999" stroke="#555"/></svg>
<div style="position:absolute;left:18px;top:442px;width:44px;height:2px;background:#d8d8d8"></div>
<svg style="position:absolute;left:20px;top:447px;" width="40" height="18" viewBox="0 0 40 18"><rect x="1" y="5" width="12" height="11" fill="#fff" stroke="#333" stroke-width="1.3"/><rect x="0" y="3" width="10" height="3" fill="#333"/><path d="M12 7 H17 V4 L22 10 L17 15 V12 H12" fill="#eee" stroke="#333" stroke-width="1.2"/><rect x="24" y="5" width="12" height="11" fill="#ccc" stroke="#333"/><circle cx="31" cy="8" r="5" fill="#eee" stroke="#444"/></svg>
<div style="position:absolute;left:326px;top:70px;width:261px;height:392.4000000000001px;background:#f2f2f2;border:1px solid #cccccc;box-shadow:2px 2px 3px rgba(0,0,0,0.25)"></div>
<div style="position:absolute;left:328px;top:72.5px;width:256.5px;height:19.3px;background:#91c9f7"></div>
<div style="position:absolute;left:356px;top:73.80px;height:16px;line-height:16px;font-size:11.5px;color:#1e1e1e;white-space:nowrap;letter-spacing:-0.35px;-webkit-text-stroke:0.1px #1e1e1e">Proof einrichten</div>
<svg style="position:absolute;left:571px;top:78.5px;" width="6" height="8" viewBox="0 0 6 8"><path d="M1 1 L4.5 4 L1 7" fill="none" stroke="#333" stroke-width="1.1"/></svg>
<div style="position:absolute;left:328px;top:91.8px;width:19.5px;height:19.3px;background:#91c9f7"></div>
<svg style="position:absolute;left:333px;top:96.8px;" width="11" height="9" viewBox="0 0 11 9"><path d="M1 4.5 L4 7.5 L10 1" fill="none" stroke="#1e3c66" stroke-width="1.4"/></svg>
<div style="position:absolute;left:356px;top:93.10px;height:16px;line-height:16px;font-size:11.5px;color:#1e1e1e;white-space:nowrap;letter-spacing:-0.35px;-webkit-text-stroke:0.1px #1e1e1e">Farb-Proof</div>
<div style="position:absolute;right:1432px;top:93.10px;height:16px;line-height:16px;font-size:11.5px;color:#1e1e1e;white-space:nowrap;text-align:right;letter-spacing:-0.35px;-webkit-text-stroke:0.1px #1e1e1e">Strg+Y</div>
<div style="position:absolute;left:356px;top:112.40px;height:16px;line-height:16px;font-size:11.5px;color:#8f8f8f;white-space:nowrap;letter-spacing:-0.35px;-webkit-text-stroke:0.1px #8f8f8f">Farbumfang-Warnung</div>
<div style="position:absolute;right:1432px;top:112.40px;height:16px;line-height:16px;font-size:11.5px;color:#8f8f8f;white-space:nowrap;text-align:right;letter-spacing:-0.35px;-webkit-text-stroke:0.1px #8f8f8f">Umsch+Strg+Y</div>
<div style="position:absolute;left:352px;top:133.4px;width:231px;height:1px;background:#d7d7d7"></div>
<div style="position:absolute;left:356px;top:138.40px;height:16px;line-height:16px;font-size:11.5px;color:#1e1e1e;white-space:nowrap;letter-spacing:-0.35px;-webkit-text-stroke:0.1px #1e1e1e">Einzoomen</div>
<div style="position:absolute;right:1432px;top:138.40px;height:16px;line-height:16px;font-size:11.5px;color:#1e1e1e;white-space:nowrap;text-align:right;letter-spacing:-0.35px;-webkit-text-stroke:0.1px #1e1e1e">Strg++</div>
<div style="position:absolute;left:356px;top:157.70px;height:16px;line-height:16px;font-size:11.5px;color:#1e1e1e;white-space:nowrap;letter-spacing:-0.35px;-webkit-text-stroke:0.1px #1e1e1e">Auszoomen</div>
<div style="position:absolute;right:1432px;top:157.70px;height:16px;line-height:16px;font-size:11.5px;color:#1e1e1e;white-space:nowrap;text-align:right;letter-spacing:-0.35px;-webkit-text-stroke:0.1px #1e1e1e">Strg+-</div>
<div style="position:absolute;left:356px;top:177.00px;height:16px;line-height:16px;font-size:11.5px;color:#1e1e1e;white-space:nowrap;letter-spacing:-0.35px;-webkit-text-stroke:0.1px #1e1e1e">Ganzes Bild</div>
<div style="position:absolute;right:1432px;top:177.00px;height:16px;line-height:16px;font-size:11.5px;color:#1e1e1e;white-space:nowrap;text-align:right;letter-spacing:-0.35px;-webkit-text-stroke:0.1px #1e1e1e">Strg+0</div>
<div style="position:absolute;left:356px;top:196.30px;height:16px;line-height:16px;font-size:11.5px;color:#1e1e1e;white-space:nowrap;letter-spacing:-0.35px;-webkit-text-stroke:0.1px #1e1e1e">Tatsächliche Pixel</div>
<div style="position:absolute;right:1432px;top:196.30px;height:16px;line-height:16px;font-size:11.5px;color:#1e1e1e;white-space:nowrap;text-align:right;letter-spacing:-0.35px;-webkit-text-stroke:0.1px #1e1e1e">Alt+Strg+0</div>
<div style="position:absolute;left:356px;top:215.60px;height:16px;line-height:16px;font-size:11.5px;color:#1e1e1e;white-space:nowrap;letter-spacing:-0.35px;-webkit-text-stroke:0.1px #1e1e1e">Ausgabegröße</div>
<div style="position:absolute;left:352px;top:236.60000000000005px;width:231px;height:1px;background:#d7d7d7"></div>
<div style="position:absolute;left:328px;top:240.30000000000004px;width:19.5px;height:19.3px;background:#91c9f7"></div>
<svg style="position:absolute;left:333px;top:245.30000000000004px;" width="11" height="9" viewBox="0 0 11 9"><path d="M1 4.5 L4 7.5 L10 1" fill="none" stroke="#1e3c66" stroke-width="1.4"/></svg>
<div style="position:absolute;left:356px;top:241.60px;height:16px;line-height:16px;font-size:11.5px;color:#1e1e1e;white-space:nowrap;letter-spacing:-0.35px;-webkit-text-stroke:0.1px #1e1e1e">Extras</div>
<div style="position:absolute;right:1432px;top:241.60px;height:16px;line-height:16px;font-size:11.5px;color:#1e1e1e;white-space:nowrap;text-align:right;letter-spacing:-0.35px;-webkit-text-stroke:0.1px #1e1e1e">Strg+H</div>
<div style="position:absolute;left:356px;top:260.90px;height:16px;line-height:16px;font-size:11.5px;color:#1e1e1e;white-space:nowrap;letter-spacing:-0.35px;-webkit-text-stroke:0.1px #1e1e1e">Einblenden</div>
<svg style="position:absolute;left:571px;top:265.6px;" width="6" height="8" viewBox="0 0 6 8"><path d="M1 1 L4.5 4 L1 7" fill="none" stroke="#333" stroke-width="1.1"/></svg>
<div style="position:absolute;left:352px;top:281.90000000000003px;width:231px;height:1px;background:#d7d7d7"></div>
<div style="position:absolute;left:356px;top:286.90px;height:16px;line-height:16px;font-size:11.5px;color:#1e1e1e;white-space:nowrap;letter-spacing:-0.35px;-webkit-text-stroke:0.1px #1e1e1e">Lineale</div>
<div style="position:absolute;right:1432px;top:286.90px;height:16px;line-height:16px;font-size:11.5px;color:#1e1e1e;white-space:nowrap;text-align:right;letter-spacing:-0.35px;-webkit-text-stroke:0.1px #1e1e1e">Strg+R</div>
<div style="position:absolute;left:352px;top:307.90000000000003px;width:231px;height:1px;background:#d7d7d7"></div>
<div style="position:absolute;left:328px;top:311.6px;width:19.5px;height:19.3px;background:#91c9f7"></div>
<svg style="position:absolute;left:333px;top:316.6px;" width="11" height="9" viewBox="0 0 11 9"><path d="M1 4.5 L4 7.5 L10 1" fill="none" stroke="#1e3c66" stroke-width="1.4"/></svg>
<div style="position:absolute;left:356px;top:312.90px;height:16px;line-height:16px;font-size:11.5px;color:#1e1e1e;white-space:nowrap;letter-spacing:-0.35px;-webkit-text-stroke:0.1px #1e1e1e">Ausrichten</div>
<div style="position:absolute;right:1432px;top:312.90px;height:16px;line-height:16px;font-size:11.5px;color:#1e1e1e;white-space:nowrap;text-align:right;letter-spacing:-0.35px;-webkit-text-stroke:0.1px #1e1e1e">Umsch+Strg+Ö</div>
<div style="position:absolute;left:356px;top:332.20px;height:16px;line-height:16px;font-size:11.5px;color:#1e1e1e;white-space:nowrap;letter-spacing:-0.35px;-webkit-text-stroke:0.1px #1e1e1e">Ausrichten an</div>
<svg style="position:absolute;left:571px;top:336.90000000000003px;" width="6" height="8" viewBox="0 0 6 8"><path d="M1 1 L4.5 4 L1 7" fill="none" stroke="#333" stroke-width="1.1"/></svg>
<div style="position:absolute;left:352px;top:353.20000000000005px;width:231px;height:1px;background:#d7d7d7"></div>
<div style="position:absolute;left:356px;top:358.20px;height:16px;line-height:16px;font-size:11.5px;color:#1e1e1e;white-space:nowrap;letter-spacing:-0.35px;-webkit-text-stroke:0.1px #1e1e1e">Hilfslinien fixieren</div>
<div style="position:absolute;right:1432px;top:358.20px;height:16px;line-height:16px;font-size:11.5px;color:#1e1e1e;white-space:nowrap;text-align:right;letter-spacing:-0.35px;-webkit-text-stroke:0.1px #1e1e1e">Alt+Strg+ü</div>
<div style="position:absolute;left:356px;top:377.50px;height:16px;line-height:16px;font-size:11.5px;color:#8f8f8f;white-space:nowrap;letter-spacing:-0.35px;-webkit-text-stroke:0.1px #8f8f8f">Hilfslinien löschen</div>
<div style="position:absolute;left:356px;top:396.80px;height:16px;line-height:16px;font-size:11.5px;color:#1e1e1e;white-space:nowrap;letter-spacing:-0.35px;-webkit-text-stroke:0.1px #1e1e1e">Neue Hilfslinie...</div>
<div style="position:absolute;left:352px;top:417.80000000000007px;width:231px;height:1px;background:#d7d7d7"></div>
<div style="position:absolute;left:356px;top:422.80px;height:16px;line-height:16px;font-size:11.5px;color:#1e1e1e;white-space:nowrap;letter-spacing:-0.35px;-webkit-text-stroke:0.1px #1e1e1e">Slices fixieren</div>
<div style="position:absolute;left:356px;top:442.10px;height:16px;line-height:16px;font-size:11.5px;color:#8f8f8f;white-space:nowrap;letter-spacing:-0.35px;-webkit-text-stroke:0.1px #8f8f8f">Slices löschen</div>
<div style="position:absolute;left:582px;top:70px;width:230px;height:256.5px;background:#f2f2f2;border:1px solid #cccccc;box-shadow:2px 2px 3px rgba(0,0,0,0.25)"></div>
<div style="position:absolute;left:612px;top:73.80px;height:16px;line-height:16px;font-size:11.5px;color:#1e1e1e;white-space:nowrap;letter-spacing:-0.35px;-webkit-text-stroke:0.1px #1e1e1e">Eigene...</div>
<div style="position:absolute;left:608px;top:94.8px;width:200px;height:1px;background:#d7d7d7"></div>
<div style="position:absolute;left:612px;top:99.80px;height:16px;line-height:16px;font-size:11.5px;color:#1e1e1e;white-space:nowrap;letter-spacing:-0.35px;-webkit-text-stroke:0.1px #1e1e1e">CMYK-Arbeitsfarbraum</div>
<div style="position:absolute;left:612px;top:119.10px;height:16px;line-height:16px;font-size:11.5px;color:#1e1e1e;white-space:nowrap;letter-spacing:-0.35px;-webkit-text-stroke:0.1px #1e1e1e">Cyan-Platte Arbeitsfarbraum</div>
<div style="position:absolute;left:612px;top:138.40px;height:16px;line-height:16px;font-size:11.5px;color:#1e1e1e;white-space:nowrap;letter-spacing:-0.35px;-webkit-text-stroke:0.1px #1e1e1e">Magenta-Platte Arbeitsfarbraum</div>
<div style="position:absolute;left:612px;top:157.70px;height:16px;line-height:16px;font-size:11.5px;color:#1e1e1e;white-space:nowrap;letter-spacing:-0.35px;-webkit-text-stroke:0.1px #1e1e1e">Gelbe Platte Arbeitsfarbraum</div>
<div style="position:absolute;left:612px;top:177.00px;height:16px;line-height:16px;font-size:11.5px;color:#1e1e1e;white-space:nowrap;letter-spacing:-0.35px;-webkit-text-stroke:0.1px #1e1e1e">Schwarze Platte Arbeitsfarbraum</div>
<div style="position:absolute;left:612px;top:196.30px;height:16px;line-height:16px;font-size:11.5px;color:#1e1e1e;white-space:nowrap;letter-spacing:-0.35px;-webkit-text-stroke:0.1px #1e1e1e">CMY-Platten Arbeitsfarbraum</div>
<div style="position:absolute;left:608px;top:217.30000000000004px;width:200px;height:1px;background:#d7d7d7"></div>
<div style="position:absolute;left:612px;top:222.30px;height:16px;line-height:16px;font-size:11.5px;color:#1e1e1e;white-space:nowrap;letter-spacing:-0.35px;-webkit-text-stroke:0.1px #1e1e1e">Macintosh-RGB</div>
<div style="position:absolute;left:612px;top:241.60px;height:16px;line-height:16px;font-size:11.5px;color:#1e1e1e;white-space:nowrap;letter-spacing:-0.35px;-webkit-text-stroke:0.1px #1e1e1e">Windows RGB</div>
<div style="position:absolute;left:584px;top:259.6px;width:19.5px;height:19.3px;background:#91c9f7"></div>
<svg style="position:absolute;left:589px;top:264.6px;" width="11" height="9" viewBox="0 0 11 9"><path d="M1 4.5 L4 7.5 L10 1" fill="none" stroke="#1e3c66" stroke-width="1.4"/></svg>
<div style="position:absolute;left:612px;top:260.90px;height:16px;line-height:16px;font-size:11.5px;color:#1e1e1e;white-space:nowrap;letter-spacing:-0.35px;-webkit-text-stroke:0.1px #1e1e1e">Monitor-RGB</div>
<div style="position:absolute;left:608px;top:281.90000000000003px;width:200px;height:1px;background:#d7d7d7"></div>
<div style="position:absolute;left:612px;top:286.90px;height:16px;line-height:16px;font-size:11.5px;color:#8f8f8f;white-space:nowrap;letter-spacing:-0.35px;-webkit-text-stroke:0.1px #8f8f8f">Papierweiß simulieren</div>
<div style="position:absolute;left:612px;top:306.20px;height:16px;line-height:16px;font-size:11.5px;color:#8f8f8f;white-space:nowrap;letter-spacing:-0.35px;-webkit-text-stroke:0.1px #8f8f8f">Schwarze Druckfarbe simulieren</div>
</body></html>
